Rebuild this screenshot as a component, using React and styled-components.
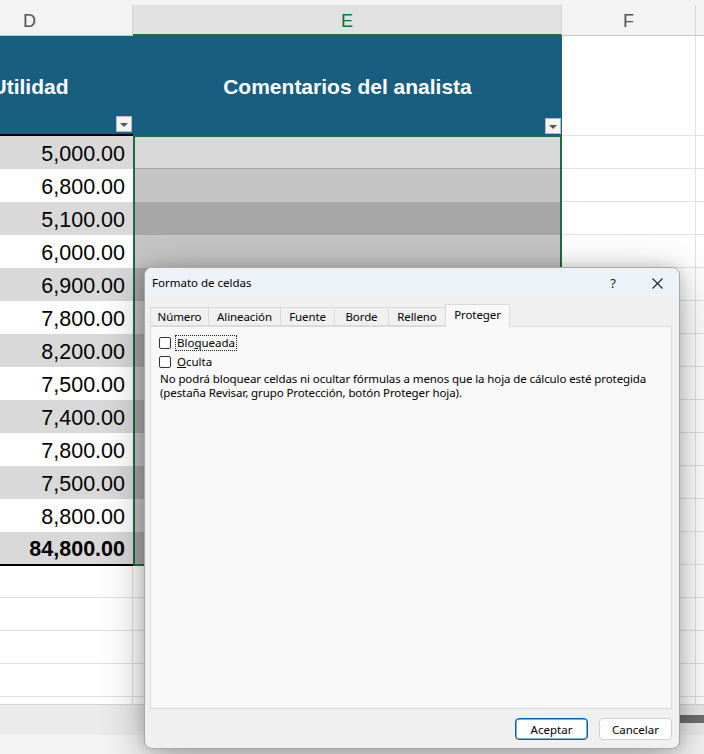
import React from 'react'
import styled, { createGlobalStyle } from 'styled-components'

const GlobalStyle = createGlobalStyle`
  html, body {
    margin: 0;
    padding: 0;
  }
  body {
    width: 704px;
    height: 754px;
    overflow: hidden;
    background: #fff;
    font-family: 'Liberation Sans', Arial, sans-serif;
  }
`

const Page = styled.div`
  position: relative;
  width: 704px;
  height: 754px;
  overflow: hidden;
  display: flex;
  flex-direction: column;
`

const TopStrip = styled.div`
  flex: none;
  height: 5px;
  background: #f3f3f3;
`

const Sheet = styled.div`
  flex: none;
  display: flex;
  height: 699px;
  margin-left: -73px;
  overflow: hidden;
`

const Column = styled.div`
  flex: none;
  width: ${p => p.$w}px;
  display: flex;
  flex-direction: column;
`

const ColHead = styled.div`
  flex: none;
  box-sizing: border-box;
  height: 31px;
  display: flex;
  align-items: center;
  justify-content: center;
  background: ${p => (p.$active ? '#e1e1e1' : '#f3f3f3')};
  border-right: 1px solid #d4d4d4;
  border-bottom: ${p => (p.$active ? '2px solid #1d6b40' : '1px solid #c6c6c6')};
  color: ${p => (p.$active ? '#1d6b40' : '#555')};
  font-size: 18px;
  padding-top: 3px;
`

const HeadCell = styled.div`
  flex: none;
  position: relative;
  box-sizing: border-box;
  height: ${p => p.$h}px;
  display: flex;
  align-items: center;
  justify-content: center;
  background: #175e80;
  color: #fff;
  font-weight: bold;
  font-size: 21px;
  border-bottom: ${p => (p.$line ? '2px solid #000' : 'none')};
  padding-top: 3px;
`

const FilterBtn = styled.div`
  position: absolute;
  right: 1px;
  bottom: ${p => p.$b}px;
  width: 16px;
  height: 16px;
  box-sizing: border-box;
  background: #f4f4f4;
  border: 1px solid #b9b9b9;
  display: flex;
  align-items: center;
  justify-content: center;
  &::after {
    content: '';
    margin-top: 2px;
    border-left: 4px solid transparent;
    border-right: 4px solid transparent;
    border-top: 4px solid #555;
  }
`

const NumCell = styled.div`
  flex: none;
  box-sizing: border-box;
  height: ${p => p.$h || 33}px;
  display: flex;
  align-items: center;
  justify-content: flex-end;
  padding: 3px 8px 0 0;
  background: ${p => (p.$shade ? '#d9d9d9' : '#fff')};
  font-size: 21.5px;
  font-weight: ${p => (p.$bold ? 'bold' : 'normal')};
  color: #000;
  border-bottom: ${p => (p.$total ? '2px solid #000' : 'none')};
`

const GridCell = styled.div`
  flex: none;
  box-sizing: border-box;
  height: ${p => p.$h || 33}px;
  background: #fff;
  border-bottom: 1px solid #e1e1e1;
  border-right: 1px solid #e1e1e1;
`

const Selection = styled.div`
  flex: none;
  box-sizing: border-box;
  height: 431px;
  border: 2px solid #1d6b40;
  overflow: hidden;
  display: flex;
  flex-direction: column;
`

const CommentCell = styled.div`
  flex: none;
  box-sizing: border-box;
  height: ${p => p.$h || 33}px;
  background: ${p => p.$bg};
  border-bottom: ${p => (p.$line ? '1px solid #a6a6a6' : 'none')};
`

const HScroll = styled.div`
  flex: none;
  height: 31px;
  background: #ebebeb;
  border-top: 1px solid #d6d6d6;
  box-sizing: border-box;
  display: flex;
  justify-content: flex-end;
`

const Thumb = styled.div`
  width: 160px;
  height: 8px;
  margin-top: 10px;
  background: #6e6e6e;
`

const StatusBar = styled.div`
  flex: 1;
  background: #f3f3f3;
`

/* dialog */

const Dialog = styled.div`
  position: absolute;
  left: 144px;
  top: 267px;
  width: 536px;
  height: 482px;
  box-sizing: border-box;
  border: 1px solid #a8a8a8;
  border-radius: 8px;
  background: #f0f0f0;
  box-shadow: 0 10px 44px rgba(0, 0, 0, 0.32), 0 0 14px rgba(0, 0, 0, 0.14);
  overflow: hidden;
  display: flex;
  flex-direction: column;
  font-family: 'Noto Sans', 'Open Sans', sans-serif;
  font-size: 11.5px;
  color: #000;
`

const TitleBar = styled.div`
  flex: none;
  height: 30px;
  display: flex;
  align-items: center;
  padding: 0 0 0 7px;
  background: #edf2f9;
  font-size: 11.5px;
`

const Title = styled.div`
  flex: 1;
  padding-bottom: 2px;
`

const TitleBtn = styled.div`
  width: 44px;
  height: 30px;
  display: flex;
  align-items: center;
  justify-content: center;
  font-size: 13px;
  color: #222;
`

const Body = styled.div`
  flex: 1;
  display: flex;
  flex-direction: column;
  padding: 6px 7px 0 5px;
`

const TabStrip = styled.div`
  flex: none;
  height: 22px;
  display: flex;
  align-items: flex-end;
  position: relative;
  z-index: 1;
`

const Tab = styled.div`
  box-sizing: border-box;
  width: ${p => p.$w}px;
  height: ${p => (p.$active ? 23 : 19)}px;
  margin-bottom: ${p => (p.$active ? -1 : 0)}px;
  display: flex;
  align-items: center;
  justify-content: center;
  padding-bottom: ${p => (p.$active ? 3 : 0)}px;
  background: ${p => (p.$active ? '#f9f9f9' : '#f0f0f0')};
  border: 1px solid #dadada;
  border-bottom: ${p => (p.$active ? 'none' : '1px solid #dadada')};
  margin-left: -1px;
  letter-spacing: -0.1px;
  &:first-child {
    margin-left: 0;
  }
`

const Panel = styled.div`
  flex: 1;
  background: #f9f9f9;
  border: 1px solid #dadada;
  padding: 7px 9px 7px 8px;
`

const CheckRow = styled.label`
  display: flex;
  align-items: center;
  gap: 5px;
  height: 17px;
  margin-bottom: 2px;
`

const Box = styled.span`
  width: 12px;
  height: 12px;
  box-sizing: border-box;
  border: 1px solid #333;
  border-radius: 2px;
  background: #fff;
`

const Label = styled.span`
  padding: 0 1px;
  outline: ${p => (p.$focus ? '1px dotted #222' : 'none')};
  line-height: 14px;
  u {
    text-decoration: underline;
  }
`

const Note = styled.p`
  margin: 2px 0 0 1px;
  line-height: 13.5px;
  letter-spacing: -0.1px;
`

const Footer = styled.div`
  flex: none;
  height: 39px;
  display: flex;
  justify-content: flex-end;
  align-items: flex-start;
  gap: 11px;
  padding: 9px 0 0 0;
  box-sizing: border-box;
`

const Button = styled.div`
  width: 73px;
  height: 22px;
  box-sizing: border-box;
  display: flex;
  align-items: center;
  justify-content: center;
  border-radius: 4px;
  background: #fdfdfd;
  border: 1px solid ${p => (p.$primary ? '#005fb8' : '#d0d0d0')};
  box-shadow: ${p => (p.$primary ? 'inset 0 0 0 0.5px #005fb8' : 'none')};
`

const values = [
  '5,000.00', '6,800.00', '5,100.00', '6,000.00', '6,900.00', '7,800.00',
  '8,200.00', '7,500.00', '7,400.00', '7,800.00', '7,500.00', '8,800.00'
]

const tabs = [
  { label: 'Número', w: 59 },
  { label: 'Alineación', w: 73 },
  { label: 'Fuente', w: 55 },
  { label: 'Borde', w: 55 },
  { label: 'Relleno', w: 58 },
  { label: 'Proteger', w: 65, active: true }
]

const commentShade = i => {
  if (i === 0) return '#d9d9d9'
  return i % 2 === 1 ? '#c5c5c5' : '#a7a7a7'
}

const emptyRows = [32, 33, 33, 33, 33]

const CloseIcon = () => (
  <svg width='11' height='11' viewBox='0 0 11 11'>
    <path d='M0.5 0.5 L10.5 10.5 M10.5 0.5 L0.5 10.5' stroke='#222' strokeWidth='1.1' fill='none' />
  </svg>
)

export default function App () {
  return (
    <Page>
      <GlobalStyle />
      <TopStrip />
      <Sheet>
        <Column $w={206}>
          <ColHead>D</ColHead>
          <HeadCell $h={100} $line>
            Utilidad
            <FilterBtn $b={2} />
          </HeadCell>
          {values.map((v, i) => (
            <NumCell key={i} $shade={i % 2 === 0}>{v}</NumCell>
          ))}
          <NumCell $shade $bold $total $h={34}>84,800.00</NumCell>
          {emptyRows.map((h, i) => <GridCell key={i} $h={h} />)}
        </Column>
        <Column $w={429}>
          <ColHead $active>E</ColHead>
          <HeadCell $h={99}>
            Comentarios del analista
            <FilterBtn $b={1} />
          </HeadCell>
          <Selection>
            {values.concat(['total']).map((v, i) => (
              <CommentCell key={i} $h={i === 0 ? 32 : 33} $bg={commentShade(i)} $line={i === 0} />
            ))}
          </Selection>
          {emptyRows.map((h, i) => <GridCell key={i} $h={h} />)}
        </Column>
        <Column $w={134}>
          <ColHead>F</ColHead>
          <GridCell $h={100} />
          {Array.from({ length: 18 }).map((_, i) => <GridCell key={i} />)}
        </Column>
        <Column $w={100}>
          <ColHead />
          <GridCell $h={100} />
          {Array.from({ length: 18 }).map((_, i) => <GridCell key={i} />)}
        </Column>
      </Sheet>
      <HScroll>
        <Thumb />
      </HScroll>
      <StatusBar />

      <Dialog>
        <TitleBar>
          <Title>Formato de celdas</Title>
          <TitleBtn>?</TitleBtn>
          <TitleBtn><CloseIcon /></TitleBtn>
        </TitleBar>
        <Body>
          <TabStrip>
            {tabs.map(t => (
              <Tab key={t.label} $w={t.w} $active={t.active}>{t.label}</Tab>
            ))}
          </TabStrip>
          <Panel>
            <CheckRow>
              <Box />
              <Label $focus>Blo<u>q</u>ueada</Label>
            </CheckRow>
            <CheckRow>
              <Box />
              <Label><u>O</u>culta</Label>
            </CheckRow>
            <Note>
              No podrá bloquear celdas ni ocultar fórmulas a menos que la hoja de cálculo esté protegida
              <br />
              (pestaña Revisar, grupo Protección, botón Proteger hoja).
            </Note>
          </Panel>
          <Footer>
            <Button $primary>Aceptar</Button>
            <Button>Cancelar</Button>
          </Footer>
        </Body>
      </Dialog>
    </Page>
  )
}
